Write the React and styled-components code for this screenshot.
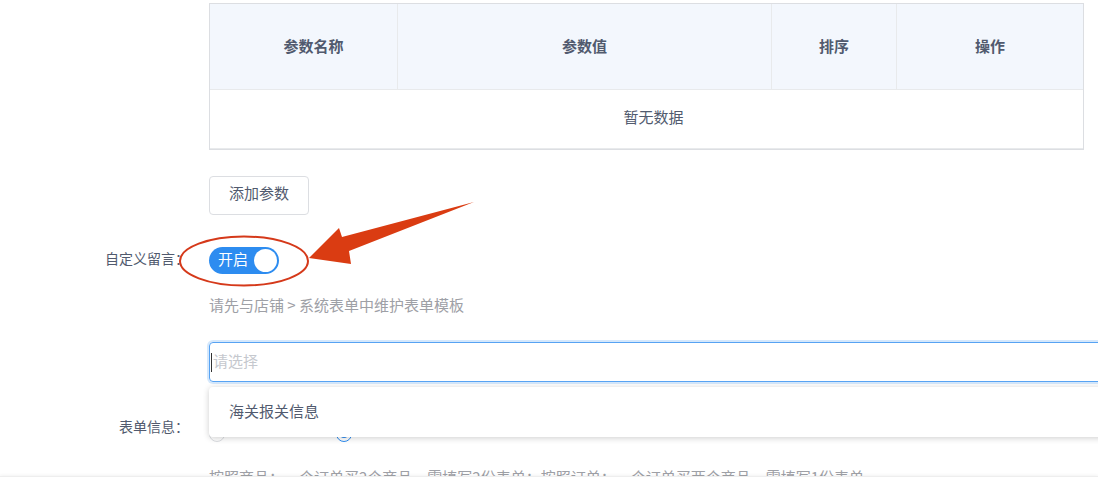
import React from "react";
import styled, { createGlobalStyle } from "styled-components";

const GlobalStyle = createGlobalStyle`
  html, body { margin: 0; padding: 0; background: #fff; overflow: hidden; }
  body {
    font-family: "Noto Sans CJK SC", "Liberation Sans", sans-serif;
    color: #515a6e;
    font-size: 15px;
  }
  * { box-sizing: border-box; }
`;

const Page = styled.div`
  position: relative;
  width: 1098px;
  height: 489px;
  overflow: hidden;
  padding-top: 3px;
`;

const Row = styled.div`
  display: flex;
  align-items: center;
  margin-top: ${(p) => p.$mt || 0}px;
`;

const Label = styled.div`
  width: 189px;
  flex: none;
  text-align: right;
  font-size: 14px;
  line-height: 20px;
  padding-bottom: 5px;
  color: #515a6e;
  white-space: nowrap;
`;

const Content = styled.div`
  margin-left: 20px;
  display: flex;
  align-items: center;
  position: relative;
`;

const Table = styled.div`
  width: 875px;
  border: 1px solid #dcdee2;
`;

const TRow = styled.div`
  display: grid;
  grid-template-columns: 188px 374px 125px 1fr;
`;

const Th = styled.div`
  height: 86px;
  background: #f3f7fd;
  border-bottom: 1px solid #e8eaec;
  border-right: ${(p) => (p.$last ? "none" : "1px solid #e8eaec")};
  display: flex;
  align-items: center;
  justify-content: center;
  padding-left: ${(p) => p.$pl || 0}px;
  padding-bottom: 2px;
  font-weight: 700;
  font-size: 15px;
  color: #515a6e;
`;

const Empty = styled.div`
  height: 59px;
  border-bottom: 1px solid #e8eaec;
  display: flex;
  align-items: center;
  justify-content: center;
  padding-left: 14px;
  padding-bottom: 5px;
  font-size: 15px;
  color: #515a6e;
`;

const Button = styled.button`
  width: 100px;
  height: 39px;
  border: 1px solid #dcdee2;
  border-radius: 4px;
  background: #fff;
  color: #515a6e;
  font-family: inherit;
  font-size: 15px;
  padding: 0 0 6px;
`;

const Switch = styled.div`
  position: relative;
  width: 70px;
  height: 27px;
  border-radius: 14px;
  background: #2d8cf0;
  display: flex;
  align-items: center;
  padding-left: 9px;
  padding-bottom: 3px;
  color: #fff;
  font-size: 15px;
  line-height: 20px;
`;

const Knob = styled.span`
  position: absolute;
  right: 2px;
  top: 2px;
  width: 23px;
  height: 23px;
  border-radius: 50%;
  background: #fff;
`;

const Helper = styled.div`
  font-size: 15px;
  line-height: 20px;
  color: #9ea0a6;
  white-space: nowrap;
`;

const SelectWrap = styled.div`
  position: relative;
  width: 920px;
`;

const Input = styled.div`
  height: 40px;
  border: 1px solid #57a3f3;
  border-radius: 4px;
  box-shadow: 0 0 0 2px rgba(45, 140, 240, 0.2);
  display: flex;
  align-items: center;
  padding-left: 10px;
  padding-bottom: 4px;
  font-size: 15px;
  color: #c5c8ce;
`;

const Caret = styled.span`
  width: 1px;
  height: 19px;
  background: #333;
  margin-left: -9px;
  margin-right: 1px;
  margin-top: 4px;
`;

const Dropdown = styled.div`
  position: absolute;
  left: 0;
  right: 0;
  top: 45px;
  height: 50px;
  background: #fff;
  border-radius: 4px;
  box-shadow: 0 1px 6px rgba(0, 0, 0, 0.2);
  z-index: 5;
  display: flex;
  align-items: center;
  padding-bottom: 4px;
`;

const Option = styled.div`
  padding-left: 20px;
  font-size: 15px;
  color: #515a6e;
`;

const RadioGroup = styled.div`
  display: flex;
  align-items: center;
  gap: 45px;
`;

const Radio = styled.label`
  display: flex;
  align-items: center;
  gap: 6px;
  font-size: 15px;
  line-height: 20px;
  color: #515a6e;
`;

const RadioDot = styled.span`
  width: 16px;
  height: 16px;
  margin-top: 12px;
  border-radius: 50%;
  border: 1px solid ${(p) => (p.$on ? "#2d8cf0" : "#dcdee2")};
  display: inline-flex;
  align-items: center;
  justify-content: center;
  &::after {
    content: "";
    width: 8px;
    height: 8px;
    border-radius: 50%;
    background: ${(p) => (p.$on ? "#2d8cf0" : "transparent")};
  }
`;

const Footer = styled.div`
  position: fixed;
  left: 0;
  right: 0;
  bottom: 0;
  height: 13px;
  background: #fff;
  border-top: 1px solid #eeeeee;
  box-shadow: 0 -1px 3px rgba(0, 0, 0, 0.05);
  z-index: 6;
`;

const Annotation = styled.svg`
  position: absolute;
  left: 0;
  top: 0;
  pointer-events: none;
  z-index: 10;
`;

export default function App() {
  return (
    <>
      <GlobalStyle />
      <Page>
        <Row>
          <Label />
          <Content>
            <Table>
              <TRow>
                <Th $pl={20}>参数名称</Th>
                <Th>参数值</Th>
                <Th>排序</Th>
                <Th $last>操作</Th>
              </TRow>
              <Empty>暂无数据</Empty>
            </Table>
          </Content>
        </Row>
        <Row $mt={26}>
          <Label />
          <Content>
            <Button>添加参数</Button>
          </Content>
        </Row>
        <Row $mt={32}>
          <Label>自定义留言：</Label>
          <Content>
            <Switch>
              开启
              <Knob />
            </Switch>
          </Content>
        </Row>
        <Row $mt={21}>
          <Label />
          <Content>
            <Helper>请先与店铺 &gt; 系统表单中维护表单模板</Helper>
          </Content>
        </Row>
        <Row $mt={27}>
          <Label />
          <Content>
            <SelectWrap>
              <Input>
                <Caret />
                请选择
              </Input>
              <Dropdown>
                <Option>海关报关信息</Option>
              </Dropdown>
            </SelectWrap>
          </Content>
        </Row>
        <Row $mt={32}>
          <Label>表单信息：</Label>
          <Content>
            <RadioGroup>
              <Radio>
                <RadioDot />
                按照商品
              </Radio>
              <Radio>
                <RadioDot $on />
                按照订单
              </Radio>
            </RadioGroup>
          </Content>
        </Row>
        <Row $mt={25}>
          <Label />
          <Content>
            <Helper>
              按照商品：一个订单买2个商品，需填写2份表单；按照订单：一个订单买两个商品，需填写1份表单
            </Helper>
          </Content>
        </Row>
        <Footer />
        <Annotation width="1098" height="489" viewBox="0 0 1098 489">
          <ellipse cx="244" cy="261" rx="64" ry="24.5" fill="none" stroke="#d5391a" strokeWidth="2" />
          <polygon
            points="309,258 339,228 342,237 474,202 349,251 351,264"
            fill="#da3c12"
          />
        </Annotation>
      </Page>
    </>
  );
}
